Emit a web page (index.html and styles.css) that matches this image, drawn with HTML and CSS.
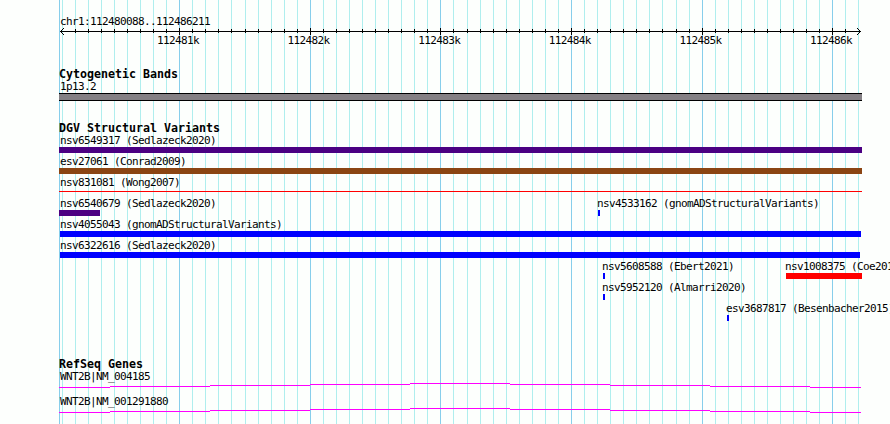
FILE: index.html
```html
<!DOCTYPE html>
<html lang="en">
<head>
    <meta charset="UTF-8">
    <title>chr1:112480088..112486211</title>
    <link rel="stylesheet" href="styles.css">
</head>
<body>
    <div class="browser">
        <!-- Grid lines behind the tracks -->
        <svg class="grid" width="890" height="424" shape-rendering="crispEdges">
            <path class="grid-minor" d="M62.5 0v424M75.5 0v424M88.5 0v424M101.5 0v424M114.5 0v424M127.5 0v424M140.5 0v424M153.5 0v424M166.5 0v424M192.5 0v424M205.5 0v424M218.5 0v424M231.5 0v424M245.5 0v424M258.5 0v424M271.5 0v424M284.5 0v424M297.5 0v424M323.5 0v424M336.5 0v424M349.5 0v424M362.5 0v424M375.5 0v424M388.5 0v424M401.5 0v424M414.5 0v424M427.5 0v424M453.5 0v424M467.5 0v424M480.5 0v424M493.5 0v424M506.5 0v424M519.5 0v424M532.5 0v424M545.5 0v424M558.5 0v424M584.5 0v424M597.5 0v424M610.5 0v424M623.5 0v424M636.5 0v424M649.5 0v424M662.5 0v424M676.5 0v424M689.5 0v424M715.5 0v424M728.5 0v424M741.5 0v424M754.5 0v424M767.5 0v424M780.5 0v424M793.5 0v424M806.5 0v424M819.5 0v424M845.5 0v424M858.5 0v424"/>
            <path class="grid-major" d="M59.5 0v424M179.5 0v424M310.5 0v424M440.5 0v424M571.5 0v424M702.5 0v424M832.5 0v424"/>
        </svg>

        <div class="tracks">
            <!-- Ruler -->
            <div class="track ruler">
                <div class="label">chr1:112480088..112486211</div>
                <svg class="scale" width="831" height="8" viewBox="59 27 831 8" shape-rendering="crispEdges">
                    <path d="M60 31.5H861M75.5 29v4M88.5 29v4M101.5 29v4M114.5 29v4M127.5 29v4M140.5 29v4M153.5 29v4M166.5 29v4M192.5 29v4M205.5 29v4M218.5 29v4M231.5 29v4M245.5 29v4M258.5 29v4M271.5 29v4M284.5 29v4M297.5 29v4M323.5 29v4M336.5 29v4M349.5 29v4M362.5 29v4M375.5 29v4M388.5 29v4M401.5 29v4M414.5 29v4M427.5 29v4M453.5 29v4M467.5 29v4M480.5 29v4M493.5 29v4M506.5 29v4M519.5 29v4M532.5 29v4M545.5 29v4M558.5 29v4M584.5 29v4M597.5 29v4M610.5 29v4M623.5 29v4M636.5 29v4M649.5 29v4M662.5 29v4M676.5 29v4M689.5 29v4M715.5 29v4M728.5 29v4M741.5 29v4M754.5 29v4M767.5 29v4M780.5 29v4M793.5 29v4M806.5 29v4M819.5 29v4M845.5 29v4"/>
                    <path d="M179.5 28v7M310.5 28v7M440.5 28v7M571.5 28v7M702.5 28v7M832.5 28v7"/>
                    <path d="M63.5 28v1M62.5 29v1M61.5 30v1M61.5 32v1M62.5 33v1M63.5 34v1M857.5 28v1M858.5 29v1M859.5 30v1M859.5 32v1M858.5 33v1M857.5 34v1"/>
                </svg>
                <div class="scale-labels">
                    <span>112481k</span>
                    <span>112482k</span>
                    <span>112483k</span>
                    <span>112484k</span>
                    <span>112485k</span>
                    <span>112486k</span>
                </div>
            </div>

            <div class="track bands">
                <h2>Cytogenetic Bands</h2>
                <div class="label">1p13.2</div>
                <div class="band"></div>
            </div>

            <div class="track variants">
                <h2>DGV Structural Variants</h2>
                <div class="row">
                    <div class="feature">
                        <div class="label">nsv6549317 (Sedlazeck2020)</div>
                        <div class="bar purple full"></div>
                    </div>
                </div>
                <div class="row">
                    <div class="feature">
                        <div class="label">esv27061 (Conrad2009)</div>
                        <div class="bar brown full"></div>
                    </div>
                </div>
                <div class="row">
                    <div class="feature">
                        <div class="label">nsv831081 (Wong2007)</div>
                        <div class="bar thin full"></div>
                    </div>
                </div>
                <div class="row">
                    <div class="feature at-start">
                        <div class="label">nsv6540679 (Sedlazeck2020)</div>
                        <div class="bar purple partial"></div>
                    </div>
                    <div class="feature inner">
                        <div class="label">nsv4533162 (gnomADStructuralVariants)</div>
                        <div class="bar blue small shifted"></div>
                    </div>
                </div>
                <div class="row">
                    <div class="feature">
                        <div class="label">nsv4055043 (gnomADStructuralVariants)</div>
                        <div class="bar blue long shifted"></div>
                    </div>
                </div>
                <div class="row">
                    <div class="feature">
                        <div class="label">nsv6322616 (Sedlazeck2020)</div>
                        <div class="bar blue shorter shifted"></div>
                    </div>
                </div>
                <div class="row from-ebert">
                    <div class="feature inner ebert">
                        <div class="label">nsv5608588 (Ebert2021)</div>
                        <div class="bar blue small shifted"></div>
                    </div>
                    <div class="feature inner">
                        <div class="label">nsv1008375 (Coe2014)</div>
                        <div class="bar red coe shifted"></div>
                    </div>
                </div>
                <div class="row from-ebert">
                    <div class="feature inner">
                        <div class="label">nsv5952120 (Almarri2020)</div>
                        <div class="bar blue small shifted"></div>
                    </div>
                </div>
                <div class="row from-besenbacher">
                    <div class="feature inner">
                        <div class="label">esv3687817 (Besenbacher2015)</div>
                        <div class="bar blue small shifted"></div>
                    </div>
                </div>
            </div>

            <div class="track genes">
                <h2>RefSeq Genes</h2>
                <div class="gene">
                    <div class="label">WNT2B|NM_004185</div>
                    <svg class="intron" width="802" height="5" viewBox="59 0 802 5" shape-rendering="crispEdges">
                        <path d="M59 4.5H110M110 3.5H210M210 2.5H310M310 1.5H410M410 .5H510M510 1.5H610M610 2.5H710M710 3.5H810M810 4.5H861"/>
                    </svg>
                </div>
                <div class="gene">
                    <div class="label">WNT2B|NM_001291880</div>
                    <svg class="intron" width="802" height="5" viewBox="59 0 802 5" shape-rendering="crispEdges">
                        <path d="M59 4.5H110M110 3.5H210M210 2.5H310M310 1.5H410M410 .5H510M510 1.5H610M610 2.5H710M710 3.5H810M810 4.5H861"/>
                    </svg>
                </div>
            </div>
        </div>
    </div>
</body>
</html>
```
FILE: styles.css
```css
* {
    margin: 0;
    padding: 0;
    box-sizing: border-box;
}

body {
    background: #fdfffd;
    color: #000;
    font-family: "DejaVu Sans Mono", "Liberation Mono", monospace;
    overflow: hidden;
}

.browser {
    position: relative;
    width: 890px;
    height: 424px;
    overflow: hidden;
}

.grid {
    position: absolute;
    top: 0;
    left: 0;
}

.grid-minor {
    stroke: #afeeee;
}

.grid-major {
    stroke: #87ceeb;
}

.tracks {
    position: relative;
    padding: 15px 0 0 59px;
}

svg {
    display: block;
    fill: none;
}

h2 {
    height: 12px;
    font-size: 11.63px;
    line-height: 12px;
    font-weight: bold;
}

.label,
.scale-labels {
    height: 12px;
    padding-left: 1px;
    font-size: 11px;
    line-height: 12px;
    letter-spacing: -0.622px;
    white-space: pre;
}

.label {
    line-height: 14px;
}

/* Ruler */
.ruler {
    height: 53px;
}

.scale {
    stroke: #000;
}

.scale-labels {
    display: flex;
    gap: 88.6px;
    padding-left: 98px;
}

.scale-labels span {
    width: 42px;
}

/* Cytogenetic bands */
.bands {
    height: 54px;
}

.band {
    width: 803px;
    height: 8px;
    margin-top: 1px;
    background: #848084;
    border: solid #000;
    border-width: 1px 0;
}

/* Structural variants */
.variants {
    height: 236px;
}

.row {
    display: flex;
    height: 21px;
}

.from-ebert {
    padding-left: 543px;
}

.from-besenbacher {
    padding-left: 667px;
}

.feature {
    flex: none;
}

.inner .label {
    padding-left: 0;
}

.at-start {
    width: 538px;
}

.ebert {
    width: 183px;
}

.bar {
    height: 6px;
    margin-top: 1px;
}

.purple {
    background: #4b0082;
}

.brown {
    background: #8b4513;
}

.blue {
    background: #00f;
}

.red {
    background: #f00;
}

.thin {
    height: 1px;
    margin-top: 3px;
    background: #f00;
}

.shifted {
    margin-left: 1px;
}

.full {
    width: 803px;
}

.partial {
    width: 41px;
}

.long {
    width: 801px;
}

.shorter {
    width: 800px;
}

.small {
    width: 2px;
}

.coe {
    width: 76px;
}

/* Genes */
.gene {
    height: 25px;
}

.intron {
    margin-top: 1px;
    stroke: #f0f;
}
```
